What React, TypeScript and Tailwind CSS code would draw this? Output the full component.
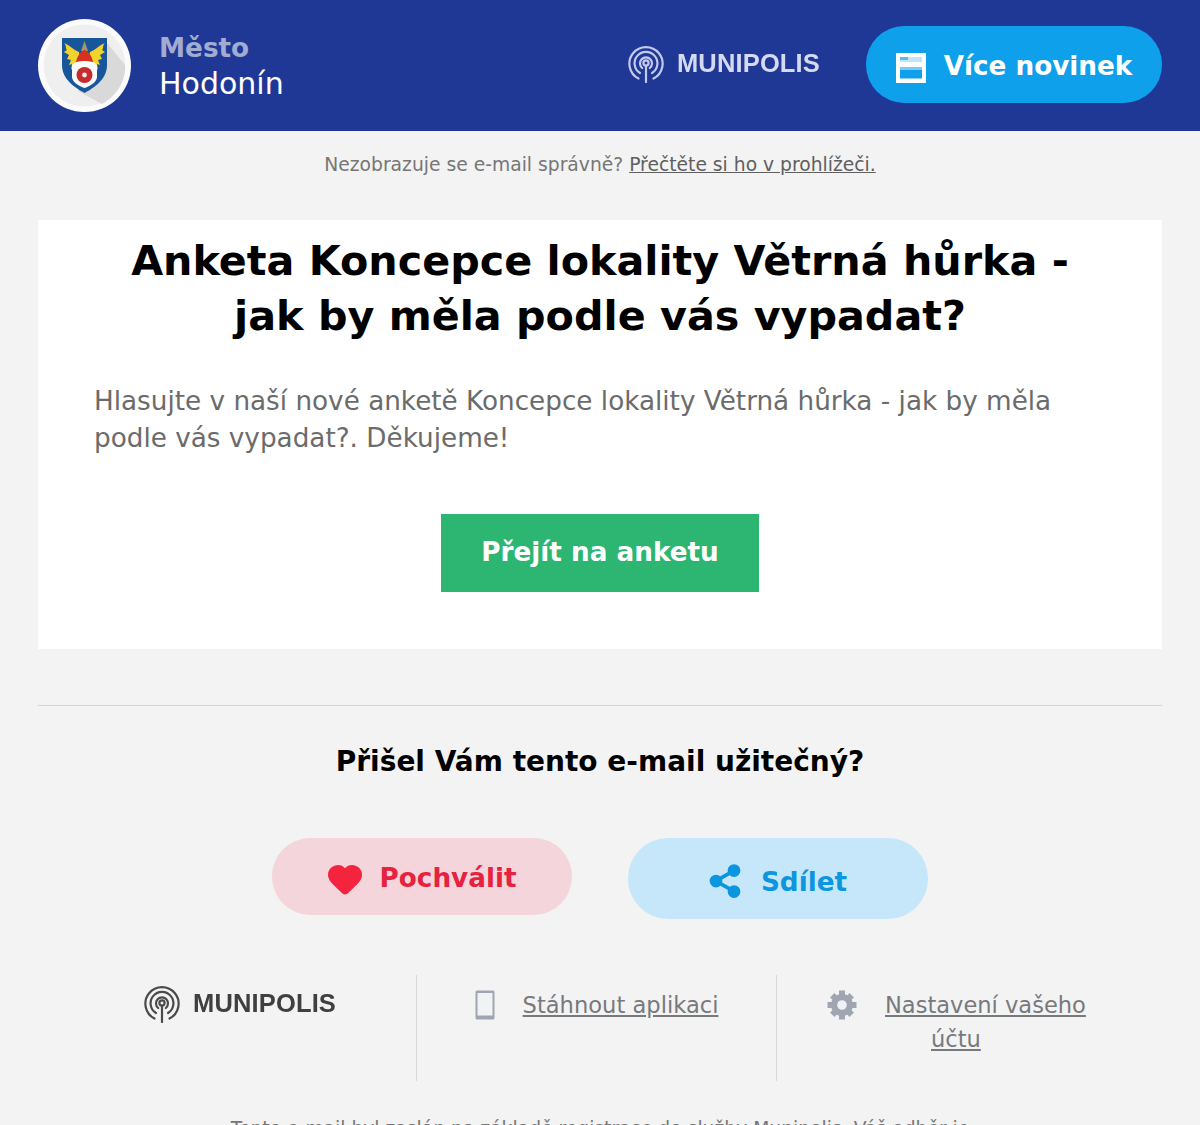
import { Heart, Share2 } from "lucide-react";

const dejavu = "font-['DejaVu_Sans',sans-serif]";

function Signal({ color }: { color: string }) {
  return (
    <svg width="36" height="38" viewBox="0 0 36 38" fill="none" stroke={color} strokeLinecap="round" strokeWidth="2.2">
      <path d="M10.5 33.5A16.6 16.6 0 1 1 25.5 33.5" />
      <path d="M12 28A11.4 11.4 0 1 1 24 28" />
      <path d="M14.2 23A6 6 0 1 1 21.8 23" />
      <circle cx="18" cy="18" r="2.6" />
      <path d="M18 21V37" />
    </svg>
  );
}

function Logo({ dark }: { dark?: boolean }) {
  return (
    <div className="flex items-center gap-[13px] blur-[0.4px]">
      <Signal color={dark ? "#4a4a4a" : "#c3c9ec"} />
      <span
        className={`font-['Liberation_Sans',sans-serif] text-[25.5px] leading-none font-bold tracking-[0.15px] ${dark ? "text-[#3f3f3f]" : "text-[#d5d9f2]"}`}
      >
        MUNIPOLIS
      </span>
    </div>
  );
}

function Badge() {
  return (
    <svg width="93" height="93" viewBox="0 0 93 93">
      <circle cx="46.5" cy="46.5" r="46.5" fill="#fbfbfb" />
      <circle cx="46.5" cy="46.5" r="41" fill="#efefef" />
      <path d="M69 24L87 46C88 60 80 76 64 85L40 72Z" fill="#d9d9d9" />
      <path d="M24 19H69V46C69 60 57 68 46.5 74C36 68 24 60 24 46Z" fill="#17569b" />
      <path d="M46.5 22L50 32H43Z" fill="#a89468" />
      <path d="M41 33C35 31 32 26 26 24C29 27 27 29 29 31L26 33L31 36L29 40L33 41L31 46L34 45L33 51L38 44L42 40Z" fill="#f1d32b" />
      <path d="M52 33C58 31 61 26 67 24C64 27 66 29 64 31L67 33L62 36L64 40L60 41L62 46L59 45L60 51L55 44L51 40Z" fill="#f1d32b" />
      <path d="M46.5 31C50 32 54 37 55 43H38C39 37 43 32 46.5 31Z" fill="#d8321f" />
      <path d="M46.5 42C52 42 57 43 59 46V58C59 63 52 67 46.5 69C41 67 34 63 34 58V46C36 43 41 42 46.5 42Z" fill="#fafafa" />
      <circle cx="46.5" cy="56" r="8" fill="#c62a2a" />
      <circle cx="46.5" cy="56" r="2.4" fill="#eeeeee" />
    </svg>
  );
}

function Newspaper() {
  return (
    <svg width="30" height="30" viewBox="0 0 30 30">
      <path d="M0 0H30V30H0Z" fill="#ffffff" />
      <path d="M4 4H26V9H4Z" fill="#bfe5f9" />
      <path d="M4 4H12V7H4Z" fill="#5ab9ef" />
      <path d="M4 14H26V25.5H4Z" fill="#0ea0ea" />
      <path d="M4 14H26V17H4Z" fill="#7ec8f2" />
    </svg>
  );
}

function Gear() {
  return (
    <svg width="30" height="30" viewBox="0 0 30 30">
      <g fill="#a0a6b1">
        <circle cx="15" cy="15" r="11" />
        <path d="M12 0.5H18V6H12Z" />
        <path d="M12 24H18V29.5H12Z" />
        <path d="M0.5 12V18H6V12Z" />
        <path d="M24 12V18H29.5V12Z" />
        <path d="M3 7.5L7.5 3L11 7L7 11Z" />
        <path d="M27 7.5L22.5 3L19 7L23 11Z" />
        <path d="M3 22.5L7.5 27L11 23L7 19Z" />
        <path d="M27 22.5L22.5 27L19 23L23 19Z" />
      </g>
      <circle cx="15" cy="15" r="4.8" fill="#eef1f6" />
    </svg>
  );
}

function Phone() {
  return (
    <svg width="20" height="30" viewBox="0 0 20 30">
      <rect x="0.5" y="0.5" width="19" height="29" rx="1.5" fill="#a0a6b1" />
      <rect x="2.5" y="3" width="15" height="22.5" fill="#f1f2f3" />
    </svg>
  );
}

export default function App() {
  return (
    <div className={`${dejavu} h-[1125px] w-full overflow-hidden bg-[#f3f3f3]`}>
      <header className="flex h-[131px] items-center justify-between bg-[#1f3795] px-[38px]">
        <div className="flex items-center gap-[28px]">
          <Badge />
          <div className="flex flex-col pt-[1px]">
            <span className="text-[26.25px] leading-[36px] font-bold text-[#a2acd2]">Město</span>
            <span className="text-[30px] leading-[36px] text-white">Hodonín</span>
          </div>
        </div>
        <div className="flex items-center gap-[46px]">
          <div className="mb-[4px]">
            <Logo />
          </div>
          <a className="mb-[2px] flex h-[77px] w-[296px] items-center justify-center gap-[18px] rounded-[38px] bg-[#0ea0ea] text-[26.25px] font-bold text-white">
            <span className="pt-[6px]">
              <Newspaper />
            </span>
            <span className="pt-[4px]">Více novinek</span>
          </a>
        </div>
      </header>

      <p className="pt-[22px] text-center text-[18.73px] leading-[24px] text-[#767676]">
        Nezobrazuje se e-mail správně? <a className="text-[#5f5f5f] underline">Přečtěte si ho v prohlížeči.</a>
      </p>

      <main className="mx-[38px] mt-[43px] h-[429px] bg-white px-[56px] pt-[14px]">
        <h1 className="text-center text-[41.27px] leading-[55px] font-bold text-black">
          Anketa Koncepce lokality Větrná hůrka -
          <br />
          jak by měla podle vás vypadat?
        </h1>
        <p className="mt-[39px] text-[26.25px] leading-[37px] text-[#6b6b6b]">
          Hlasujte v naší nové anketě Koncepce lokality Větrná hůrka - jak by měla
          <br />
          podle vás vypadat?. Děkujeme!
        </p>
        <div className="mt-[57px] flex justify-center">
          <a className="flex h-[78px] w-[318px] items-center justify-center bg-[#2db572] text-[26.25px] font-bold text-white">
            Přejít na anketu
          </a>
        </div>
      </main>

      <div className="mx-[38px] mt-[56px] border-t border-[#d6d6d6] pt-[37px]">
        <h2 className="text-center text-[28px] leading-[38px] font-bold text-black">Přišel Vám tento e-mail užitečný?</h2>
        <div className="mt-[57px] flex items-start justify-center gap-[56px]">
          <a className="flex h-[77px] w-[300px] items-center justify-center gap-[16px] rounded-[38px] bg-[#f4d5dc] pr-[2px] text-[26.25px] font-bold text-[#e6223f]">
            <span className="pt-[4px]">
              <Heart size={38} fill="#f4243f" stroke="#f4243f" strokeWidth={1.5} />
            </span>
            <span className="pt-[5px]">Pochválit</span>
          </a>
          <a className="flex h-[81px] w-[300px] items-center justify-center gap-[18px] rounded-[40px] bg-[#c6e7fa] pr-[2px] text-[26.25px] font-bold text-[#0c96e0]">
            <span className="pt-[5px]">
              <Share2 size={36} fill="#0c96e0" stroke="#0c96e0" strokeWidth={2.5} />
            </span>
            <span className="pt-[8px]">Sdílet</span>
          </a>
        </div>
      </div>

      <div className="mx-[38px] mt-[56px] grid grid-cols-[379px_360px_1fr]">
        <div className="h-[106px] border-r border-[#d8d8d8] pt-[10px] pl-[106px]">
          <Logo dark />
        </div>
        <div className="flex h-[106px] justify-center gap-[28px] border-r border-[#d8d8d8] pt-[15px]">
          <Phone />
          <a className="text-[22.6px] leading-[30px] text-[#77797d] underline">Stáhnout aplikaci</a>
        </div>
        <div className="flex h-[106px] gap-[28px] pt-[15px] pl-[50px]">
          <Gear />
          <div className="-mt-[2px] text-[22.55px] leading-[34px] text-[#77797d]">
            <a className="underline">Nastavení vašeho</a>
            <div className="pl-[46px]">
              <a className="underline">účtu</a>
            </div>
          </div>
        </div>
      </div>

      <p className="mt-[36px] text-center text-[18.73px] leading-[24px] text-[#767676]">
        Tento e-mail byl zaslán na základě registrace do služby Munipolis. Váš odběr je
      </p>
    </div>
  );
}
